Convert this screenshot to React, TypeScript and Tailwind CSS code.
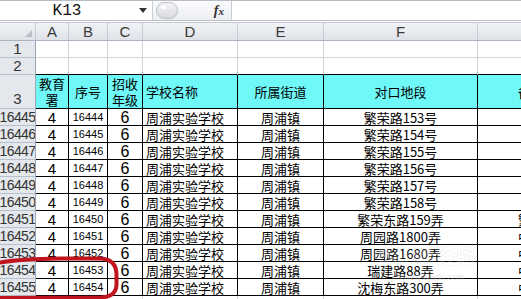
import React from "react";

const CJK = "font-['Noto_Sans_CJK_SC','Noto_Sans',sans-serif]";
const NUM = "font-['Liberation_Sans',Arial,sans-serif]";

const data: [number, number, string, string][] = [
  [16445, 16444, "繁荣路153号", ""],
  [16446, 16445, "繁荣路154号", ""],
  [16447, 16446, "繁荣路155号", ""],
  [16448, 16447, "繁荣路156号", ""],
  [16449, 16448, "繁荣路157号", ""],
  [16450, 16449, "繁荣路158号", ""],
  [16451, 16450, "繁荣东路159弄", "繁"],
  [16452, 16451, "周园路1800弄", "中"],
  [16453, 16452, "周园路1680弄", "中"],
  [16454, 16453, "瑞建路88弄", "中"],
  [16455, 16454, "沈梅东路300弄", "中"],
];

const rh =
  "w-[36px] shrink-0 border-r border-b border-r-[#9aa5b5] border-b-[#b7c0cc] bg-[#e4e7eb] text-[#333] flex items-end justify-center overflow-hidden";
const gridCell = "shrink-0 border-r border-b border-[#d4d4d4]";
const dataCell = "shrink-0 border-r border-b border-black flex items-center overflow-hidden leading-[15px]";

function ColHead({ w, label }: { w: string; label: string }) {
  return (
    <div
      className={`${w} shrink-0 border-r border-[#c5ccd6] flex items-center justify-center text-[15px] leading-[16px] text-[#3a3a3a] ${NUM}`}
    >
      {label}
    </div>
  );
}

export default function App() {
  return (
    <div className="relative w-[521px] h-[299px] overflow-hidden bg-white">
      {/* formula bar */}
      <div className="flex h-[21px] border-t border-b border-[#b9bec6] bg-white">
        <div className="w-[134px] flex items-center justify-center text-[16px] leading-[18px] text-[#111] font-['Liberation_Mono',monospace]">
          K13
        </div>
        <div className="w-[18px] flex items-center justify-center">
          <svg width="8" height="5" viewBox="0 0 8 5">
            <path d="M0 0 L8 0 L4 5 Z" fill="#333" />
          </svg>
        </div>
        <div className="w-[80px] flex items-center border-l border-r border-[#c9ced6] bg-gradient-to-b from-[#fbfbfc] to-[#eceef1]">
          <div className="ml-[3px] w-[22px] h-[17px] rounded-full border border-[#b9bdc4] bg-gradient-to-b from-[#f4f4f4] to-[#d8dadf] flex items-start pl-[4px] pt-[3px]">
            <div className="w-[5px] h-[3px] rounded-full bg-white" />
          </div>
          <div className="ml-auto mr-[7px] text-[14px] italic font-bold text-[#333] font-['Liberation_Serif',serif] leading-none">
            f<span className="text-[11px]">x</span>
          </div>
        </div>
        <div className="flex-1" />
      </div>
      <div className="h-[2px] border-b border-[#c3c9d2] bg-white" />

      {/* column header */}
      <div className="flex h-[18px] border-b border-[#aab4c2] bg-gradient-to-b from-[#f0f2f5] to-[#dfe3e8]">
        <div className="w-[36px] shrink-0 border-r border-[#c5ccd6] relative">
          <svg className="absolute right-[3px] bottom-[3px]" width="7" height="7" viewBox="0 0 7 7">
            <path d="M7 0 L7 7 L0 7 Z" fill="#b9bec6" />
          </svg>
        </div>
        <ColHead w="w-[33px]" label="A" />
        <ColHead w="w-[39px]" label="B" />
        <ColHead w="w-[35px]" label="C" />
        <ColHead w="w-[95px]" label="D" />
        <ColHead w="w-[86px]" label="E" />
        <ColHead w="w-[154px]" label="F" />
        <ColHead w="w-[150px]" label="" />
      </div>

      {/* rows 1 & 2 */}
      {[1, 2].map((n) => (
        <div key={n} className="flex h-[17px]">
          <div className={`${rh} text-[15px] leading-[16px] ${NUM} ${n === 2 ? "border-b-[#9aa5b5]" : ""}`}>{n}</div>
          {["w-[33px]", "w-[39px]", "w-[35px]", "w-[95px]", "w-[86px]", "w-[154px]", "w-[150px]"].map((w, i) => (
            <div key={i} className={`${gridCell} ${w} ${n === 2 ? "border-b-black" : ""}`} />
          ))}
        </div>
      ))}

      {/* row 3 header */}
      <div className={`flex h-[34px] text-[13px] text-black ${CJK}`}>
        <div className={`${rh} text-[15px] leading-[18px] ${NUM}`}>3</div>
        <div className="w-[33px] shrink-0 border-r border-b border-black bg-[#6ff8f8] flex flex-col items-center justify-center leading-[16px]">
          <span>教育</span>
          <span>署</span>
        </div>
        <div className={`${dataCell} w-[39px] bg-[#6ff8f8] justify-center`}>序号</div>
        <div className="w-[35px] shrink-0 border-r border-b border-black bg-[#6ff8f8] flex flex-col items-center justify-center leading-[16px]">
          <span>招收</span>
          <span>年级</span>
        </div>
        <div className={`${dataCell} w-[95px] bg-[#6ff8f8] pl-[3px]`}>学校名称</div>
        <div className={`${dataCell} w-[86px] bg-[#6ff8f8] justify-center`}>所属街道</div>
        <div className={`${dataCell} w-[154px] bg-[#6ff8f8] justify-center`}>对口地段</div>
        <div className={`${dataCell} w-[150px] bg-[#6ff8f8] pl-[40px]`}>备注</div>
      </div>

      {/* data rows */}
      {data.map(([r, idx, road, g]) => (
        <div key={r} className={`flex h-[17px] text-black text-[13px] ${CJK}`}>
          <div className={`${rh} text-[14px] leading-[16px] tracking-[-0.6px] ${NUM}`}>
            {r}
          </div>
          <div className={`${dataCell} w-[33px] justify-center text-[15px] ${NUM}`}>4</div>
          <div className={`${dataCell} w-[39px] justify-center text-[11px] ${NUM}`}>{idx}</div>
          <div className={`${dataCell} w-[35px] justify-center text-[16px] ${NUM}`}>6</div>
          <div className={`${dataCell} w-[95px] pl-[3px]`}>周浦实验学校</div>
          <div className={`${dataCell} w-[86px] justify-center`}>周浦镇</div>
          <div className={`${dataCell} w-[154px] justify-center`}>{road}</div>
          <div className={`${dataCell} w-[150px] pl-[40px]`}>{g}</div>
        </div>
      ))}
      <div className="flex h-[17px]">
        <div className={rh} />
        {["w-[33px]", "w-[39px]", "w-[35px]", "w-[95px]", "w-[86px]", "w-[154px]", "w-[150px]"].map((w, i) => (
          <div key={i} className={`${gridCell} ${w}`} />
        ))}
      </div>

      {/* watermark */}
      <div className="absolute left-[378px] top-[244px] flex items-center gap-[2px] opacity-[0.2] pointer-events-none">
        <span className={`text-[20px] leading-[24px] font-bold text-white [text-shadow:0_0_1px_#888,0_0_1px_#888] ${NUM}`}>Bai</span>
        <span className={`text-[14px] font-bold text-white bg-[#c9c9c9] rounded-[6px] px-[3px] leading-[16px] ${NUM}`}>du</span>
        <span className={`text-[20px] leading-[24px] font-bold text-white [text-shadow:0_0_1px_#888,0_0_1px_#888] ${CJK}`}>经验</span>
      </div>
      <div className={`absolute left-[392px] top-[272px] text-[9px] leading-[10px] text-[#ccc] opacity-50 ${NUM}`}>
        jingyan.baidu.com
      </div>

      {/* red annotation */}
      <svg className="absolute left-0 top-0 pointer-events-none" width="521" height="299" viewBox="0 0 521 299">
        <path
          d="M -12 265 Q 10 259 60 258.5 L 100 258.5 Q 116 259 116.5 274 L 116.5 285 Q 116 297 100 297.5 L -12 298"
          fill="none"
          stroke="#c0141f"
          strokeWidth="4"
          strokeLinecap="round"
        />
      </svg>
    </div>
  );
}
